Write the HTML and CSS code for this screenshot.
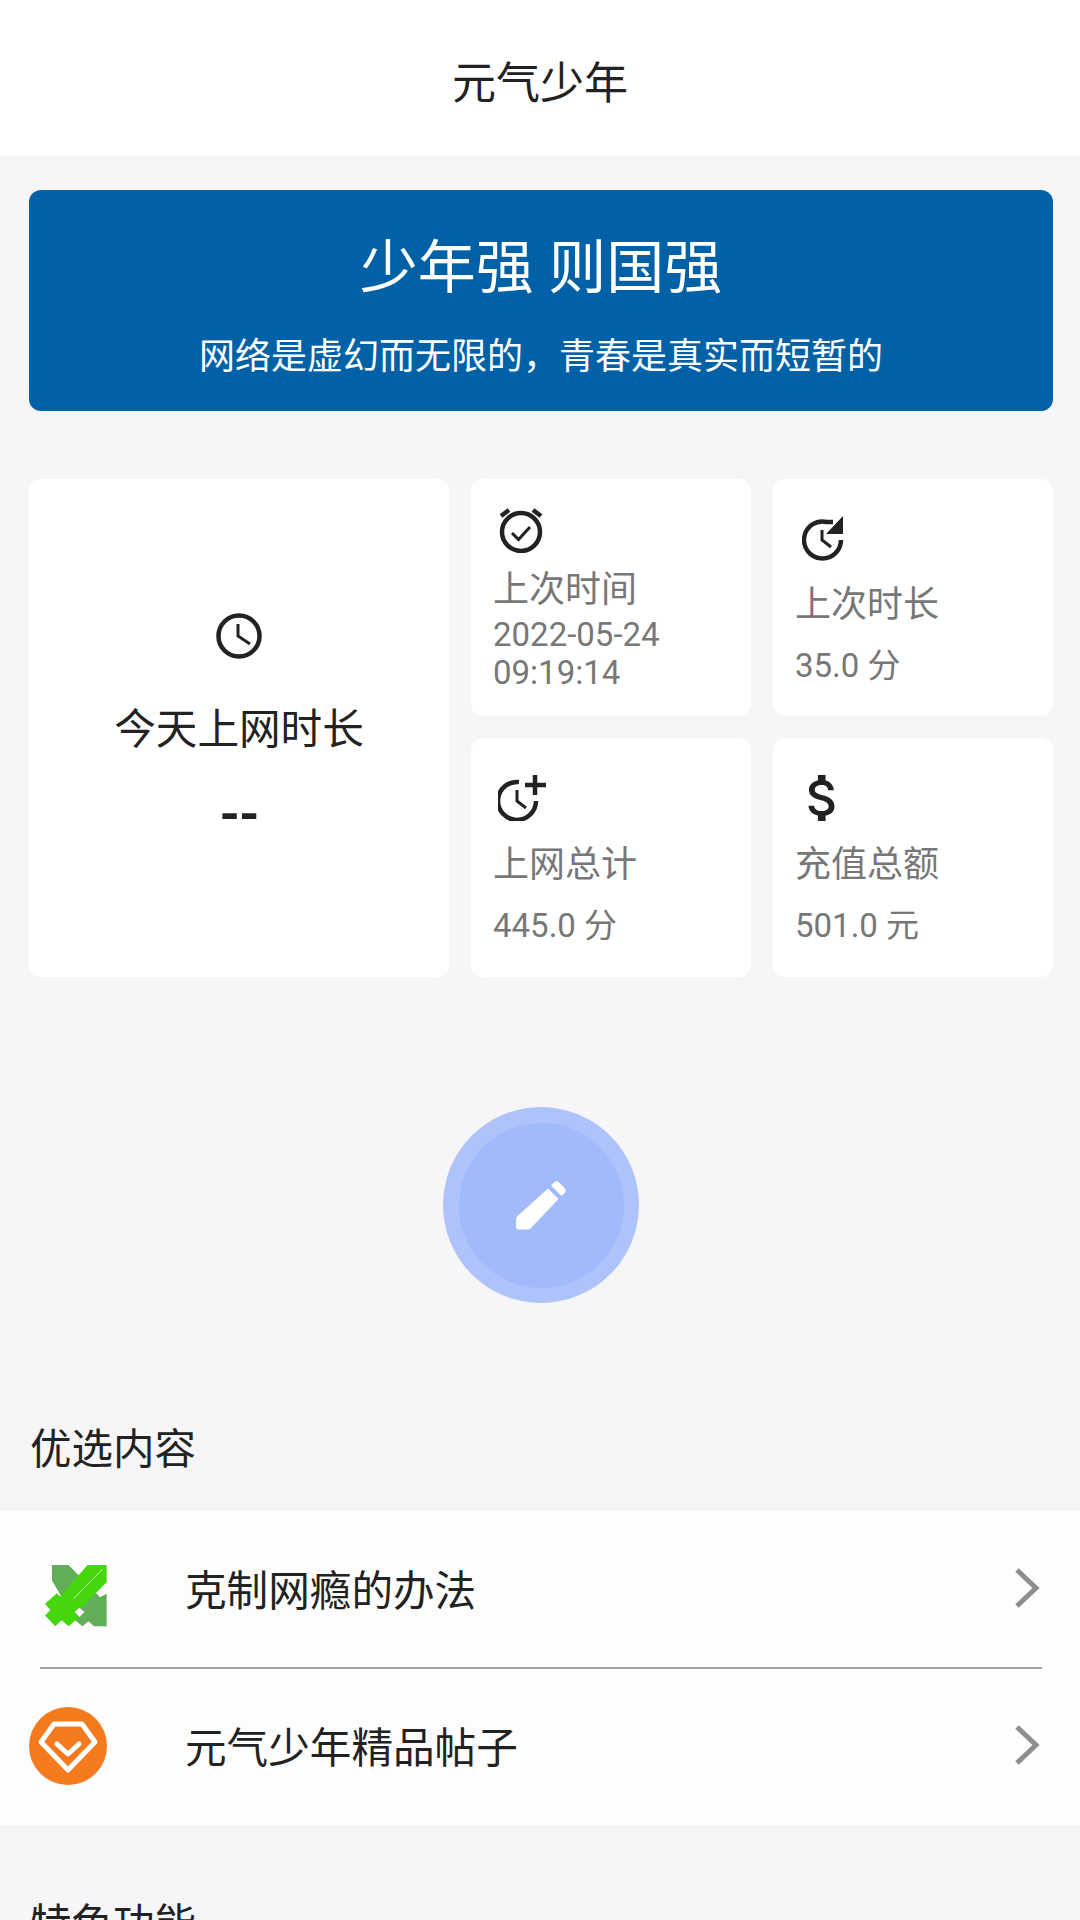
FILE: index.html
```html
<!DOCTYPE html>
<html lang="zh-CN">
<head>
    <meta charset="UTF-8">
    <meta name="viewport" content="width=device-width, initial-scale=1.0">
    <title>元气少年</title>
    <link rel="stylesheet" href="styles.css">
</head>
<body>

<header class="top-bar">元气少年</header>

<main class="main">
    <section class="banner">
        <h1 class="banner-title">少年强 则国强</h1>
        <p class="banner-sub">网络是虚幻而无限的，青春是真实而短暂的</p>
    </section>

    <section class="stats">
        <div class="card card-today">
            <svg class="icon" viewBox="0 0 46 46">
                <circle class="line" cx="23" cy="23" r="20.5"/>
                <path class="line thin" d="M22 11v12l12 8"/>
            </svg>
            <div class="today-label">今天上网时长</div>
            <div class="today-value">--</div>
        </div>

        <div class="card card-small card-tight">
            <svg class="icon" viewBox="0 0 46 46">
                <circle class="line" cx="23" cy="25" r="19"/>
                <path class="line" d="M3 9l8-6M43 9l-8-6"/>
                <path class="line thin" d="M14 26l6.500 6.500L32 20"/>
            </svg>
            <div class="card-label">上次时间</div>
            <div class="card-value">2022-05-24<br>09:19:14</div>
        </div>

        <div class="card card-small card-history">
            <svg class="icon" viewBox="0 0 46 46">
                <path class="line" d="M39 25a18.500 18.500 0 1 1-14-18h6"/>
                <path class="fill" d="M41 1v18H24z"/>
                <path class="line thin" d="M20 15v10l9 7"/>
            </svg>
            <div class="card-label">上次时长</div>
            <div class="card-value">35.0 分</div>
        </div>

        <div class="card card-small card-total">
            <svg class="icon" viewBox="0 0 50 46">
                <path class="line" d="M38 26a19 19 0 1 1-17-19"/>
                <path class="line" d="M37 0v20M27 10h21"/>
                <path class="line thin" d="M19 15v11l9 7"/>
            </svg>
            <div class="card-label">上网总计</div>
            <div class="card-value">445.0 分</div>
        </div>

        <div class="card card-small">
            <svg class="icon" viewBox="3 3 18 18">
                <path class="fill" d="M11.8 10.900c-2.270-.590-3-1.200-3-2.150 0-1.090 1.010-1.850 2.700-1.850 1.780 0 2.440.850 2.500 2.100h2.210c-.070-1.720-1.120-3.300-3.210-3.810V3h-3v2.160c-1.940.420-3.500 1.680-3.500 3.610 0 2.310 1.910 3.460 4.700 4.130 2.500.600 3 1.480 3 2.410 0 .690-.490 1.790-2.700 1.790-2.060 0-2.870-.920-2.980-2.100h-2.200c.120 2.190 1.760 3.420 3.680 3.830V21h3v-2.150c1.950-.370 3.500-1.500 3.500-3.550 0-2.840-2.430-3.810-4.700-4.400z"/>
            </svg>
            <div class="card-label">充值总额</div>
            <div class="card-value">501.0 元</div>
        </div>
    </section>

    <div class="fab-wrap">
        <div class="fab">
            <div class="fab-inner">
                <svg class="fab-icon" viewBox="0 0 51 52">
                    <path d="M38 3.500q2.500-2.500 5-0l5.500 5.500q2.500 2.500 0 5l-3 3-10.500-10.500z"/>
                    <path d="M32 9.500L42.500 20 15 49q-1.500 1.500-3.500 1.500H2q-2 0-2-2v-8q0-2 1.500-3.500z"/>
                </svg>
            </div>
        </div>
    </div>
</main>

<h2 class="section-title">优选内容</h2>
<section class="list">
    <div class="row">
        <div class="row-icon">
            <svg class="sword" viewBox="134 73 187 187">
                <path fill="#62ad5a" d="M155 73H205L300 170L320 160V258H282L265 243L247 258L225 240L155 120Z"/>
                <path fill="#46d60d" d="M262 73H320V125L243 202L223 216L236 232L205 258L184 240L165 258L134 225L150 209L134 190L170 158L180 168Z"/>
                <path fill="#fff" d="M223 215l15-13 15 13-15 15z"/>
                <path stroke="#d8f5c8" stroke-width="2.500" d="M220 175l88-90"/>
            </svg>
        </div>
        <div class="row-text">克制网瘾的办法</div>
        <svg class="chevron" viewBox="0 0 26 42">
            <path d="M3 3l19 18L3 39"/>
        </svg>
    </div>
    <div class="divider"></div>
    <div class="row">
        <div class="row-icon">
            <svg class="gem" viewBox="0 0 78 78">
                <circle fill="#f47a1d" cx="39" cy="39" r="39"/>
                <path class="gem-line" d="M25 17h28l13 18-27 28-27-28z"/>
                <path class="gem-line" d="M28 37l11 10 11-10"/>
            </svg>
        </div>
        <div class="row-text">元气少年精品帖子</div>
        <svg class="chevron" viewBox="0 0 26 42">
            <path d="M3 3l19 18L3 39"/>
        </svg>
    </div>
</section>

<h2 class="section-title section-next">特色功能</h2>

</body>
</html>
```

FILE: styles.css
```css
:root {
    --page-bg: #f6f5f7;
    --text-dark: #222222;
    --text-grey: #777777;
    --banner-blue: #0061a6;
}

* {
    margin: 0;
    padding: 0;
    box-sizing: border-box;
}

body {
    font-family: Roboto, 'Noto Sans CJK SC', sans-serif;
    color: var(--text-dark);
    background: var(--page-bg);
    height: 1920px;
    overflow: hidden;
}

.top-bar {
    height: 156px;
    padding-top: 4px;
    background: #fff;
    display: flex;
    align-items: center;
    justify-content: center;
    font-size: 44px;
}

.main {
    padding: 34px 27px 0 29px;
}

.banner {
    height: 221px;
    background: var(--banner-blue);
    border-radius: 12px;
    color: #fff;
    display: flex;
    flex-direction: column;
    align-items: center;
    padding-top: 38px;
}

.banner-title {
    font-size: 58px;
    font-weight: 400;
    line-height: 80px;
}

.banner-sub {
    font-size: 36px;
    line-height: 50px;
    margin-top: 24px;
}

.stats {
    margin-top: 68px;
    display: grid;
    grid-template-columns: 420px 280px 280px;
    grid-template-rows: 237px 239px;
    gap: 22px;
}

.card {
    background: #fff;
    border-radius: 12px;
    display: flex;
    flex-direction: column;
    justify-content: center;
}

.card-today {
    grid-row: span 2;
    align-items: center;
}

.icon {
    width: 46px;
    height: 46px;
    flex: none;
}

.line {
    fill: none;
    stroke: #222;
    stroke-width: 4.500;
}

.thin {
    stroke-width: 3;
}

.fill {
    fill: #222;
}

.today-label {
    font-size: 41.600px;
    line-height: 50px;
    margin-top: 46px;
}

.today-value {
    font-size: 52px;
    font-weight: 700;
    letter-spacing: -1px;
    line-height: 56px;
    margin-top: 32px;
}

.card-small {
    padding: 5px 0 0 22px;
}

.card-small .icon {
    margin-left: 5px;
}

.card-history .icon {
    margin-left: 7px;
}

.card-total .icon {
    width: 50px;
}

.card-label {
    font-size: 36px;
    line-height: 44px;
    color: var(--text-grey);
    margin-top: 22px;
}

.card-value {
    font-size: 33px;
    line-height: 38px;
    color: var(--text-grey);
    margin-top: 20px;
}

.card-tight {
    padding-top: 3px;
}

.card-tight .card-label {
    margin-top: 15px;
}

.card-tight .card-value {
    margin-top: 4px;
}

.fab-wrap {
    margin-top: 130px;
    display: flex;
    justify-content: center;
}

.fab {
    width: 196px;
    height: 196px;
    border-radius: 50%;
    background: #aec3fa;
    display: flex;
    align-items: center;
    justify-content: center;
}

.fab-inner {
    width: 165px;
    height: 165px;
    border-radius: 50%;
    background: #a0bafb;
    display: flex;
    align-items: center;
    justify-content: center;
}

.fab-icon {
    width: 51px;
    height: 52px;
    fill: #fff;
}

.section-title {
    font-size: 41.500px;
    font-weight: 400;
    line-height: 60px;
    padding-left: 30px;
    margin-top: 117px;
    margin-bottom: 31px;
}

.section-next {
    margin-top: 70px;
}

.list {
    background: #fdfdfd;
}

.row {
    height: 157px;
    padding: 0 40px 0 29px;
    display: flex;
    align-items: center;
}

.row-icon {
    width: 78px;
    height: 78px;
    margin-right: 78px;
    display: flex;
    align-items: center;
    justify-content: flex-end;
}

.sword {
    width: 62px;
    height: 62px;
    margin-top: 12px;
}

.gem {
    width: 78px;
    height: 78px;
    margin-top: -2px;
}

.gem-line {
    fill: none;
    stroke: #fff;
    stroke-width: 5;
    stroke-linejoin: round;
    stroke-linecap: round;
}

.row-text {
    flex: 1;
    font-size: 41.600px;
    padding-bottom: 4px;
}

.chevron {
    width: 26px;
    height: 42px;
    margin-bottom: 4px;
    fill: none;
    stroke: #8e8e8e;
    stroke-width: 5;
}

.divider {
    height: 2px;
    margin: -1px 38px -1px 40px;
    background: #a3a3a3;
}
```
